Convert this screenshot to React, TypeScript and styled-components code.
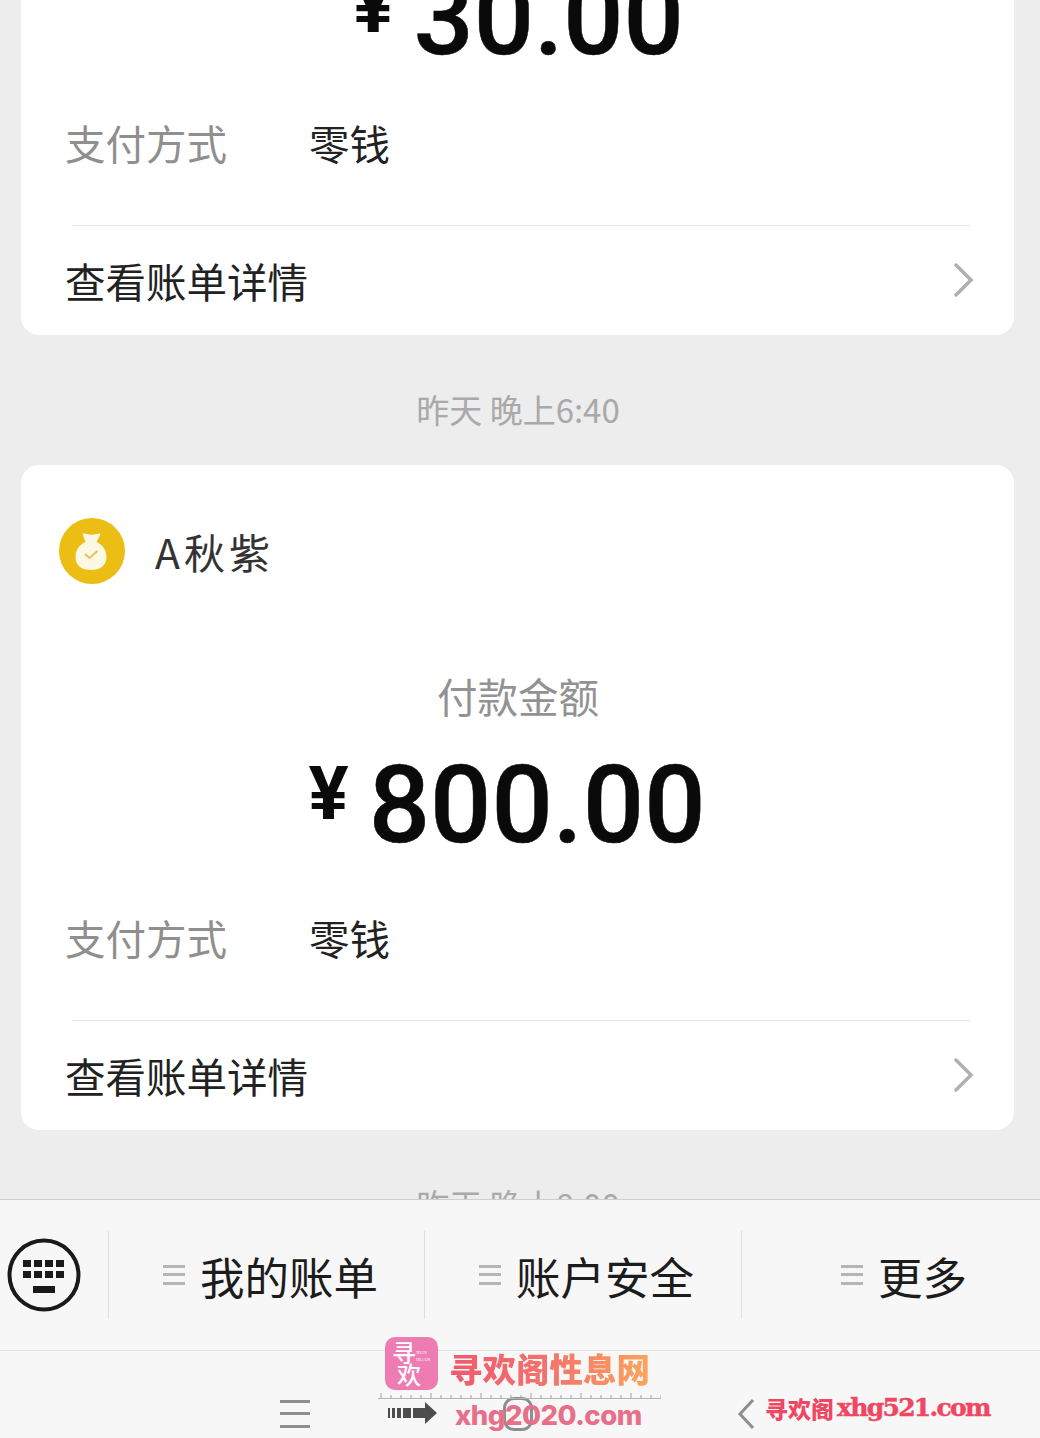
import React from 'react';
import styled, { createGlobalStyle } from 'styled-components';

const CJK = `"Noto Sans CJK SC", "Noto Sans", sans-serif`;

const GlobalStyle = createGlobalStyle`
  html, body {
    margin: 0;
    padding: 0;
    background: #ededed;
  }
  * {
    box-sizing: border-box;
  }
`;

const Page = styled.div`
  position: relative;
  display: flex;
  flex-direction: column;
  width: 1040px;
  height: 1438px;
  overflow: hidden;
  font-family: ${CJK};
`;

const Feed = styled.div`
  flex: none;
  height: 1199px;
  overflow: hidden;
`;

const FeedInner = styled.div`
  display: flex;
  flex-direction: column;
  margin-top: -330px;
`;

const Time = styled.div`
  height: 130px;
  padding: 50px 4px 0 0;
  text-align: center;
  font-size: 33px;
  line-height: 48px;
  color: #a9a9a9;
  flex: none;
`;

const Card = styled.div`
  flex: none;
  height: 665px;
  margin: 0 26px 0 21px;
  padding-top: 53px;
  background: #fff;
  border-radius: 18px;
`;

const Header = styled.div`
  display: flex;
  align-items: center;
  gap: 30px;
  height: 66px;
  padding-left: 38px;
`;

const Name = styled.div`
  font-size: 41px;
  line-height: 48px;
  letter-spacing: 4px;
  color: #333;
`;

const Label = styled.div`
  margin-top: 88px;
  text-align: center;
  padding-left: 1px;
  font-size: 40.500px;
  line-height: 48px;
  color: #929292;
`;

// the two receipts sit a little differently, so the offsets come from the data
const Amount = styled.div<{ $drop: number; $shift: number }>`
  display: flex;
  justify-content: center;
  align-items: flex-start;
  margin-top: ${(p) => 31 + p.$drop}px;
  height: ${(p) => 107 - p.$drop}px;
  padding-left: ${(p) => Math.max(p.$shift, 0)}px;
  padding-right: ${(p) => Math.max(-p.$shift, 0)}px;
  gap: 20px;
  color: #0a0a0a;
`;

const Yen = styled.span`
  margin-top: 6px;
  font-family: Roboto, sans-serif;
  font-weight: 700;
  font-size: 75px;
  line-height: 72px;
`;

const Digits = styled.span<{ $size: number }>`
  font-family: Roboto, sans-serif;
  font-weight: 500;
  font-size: ${(p) => p.$size}px;
  line-height: 108px;
  -webkit-text-stroke: 0.500px #0a0a0a;
`;

const PayRow = styled.div`
  display: flex;
  height: 48px;
  margin-top: 56px;
  padding-left: 44px;
  font-size: 40.500px;
  line-height: 48px;
`;

const PayLabel = styled.span`
  width: 244px;
  color: #8f8f8f;
`;

const PayValue = styled.span`
  color: #222;
`;

const Divider = styled.div`
  height: 1px;
  margin: 58px 44px 0 51px;
  background: #e6e6e6;
`;

const DetailRow = styled.div`
  display: flex;
  align-items: center;
  justify-content: space-between;
  height: 108px;
  padding: 0 40px 0 44px;
  font-size: 40.500px;
  color: #222;
`;

const Menu = styled.div`
  flex: none;
  display: flex;
  align-items: center;
  height: 152px;
  background: #f7f7f7;
  border-top: 1px solid #cfcfcf;
  border-bottom: 1px solid #e2e2e2;
`;

const KeyCell = styled.div`
  flex: none;
  display: flex;
  align-items: center;
  width: 108px;
  padding-left: 7px;
`;

const MenuItem = styled.div<{ $w: number; $pad: number }>`
  flex: none;
  display: flex;
  align-items: center;
  gap: 15px;
  width: ${(p) => p.$w}px;
  height: 88px;
  padding-left: ${(p) => p.$pad}px;
  border-left: 1px solid #dedede;
  font-size: 44.500px;
  color: #1c1c1c;
`;

const MenuBars = styled.span`
  flex: none;
  width: 22px;
  height: 20px;
  border-top: 3px solid #b5b5b5;
  border-bottom: 3px solid #b5b5b5;
  position: relative;
  &::after {
    content: '';
    position: absolute;
    left: 0;
    right: 0;
    top: 5px;
    height: 3px;
    background: #b5b5b5;
  }
`;

const Nav = styled.div`
  flex: 1;
  display: grid;
  grid-template-columns: 280px 30px 193px 30px 204px 18px;
  align-items: center;
  background: #f7f7f7;
  padding-top: 38px;
`;

const NavBars = styled.span`
  grid-column: 2;
  width: 30px;
  height: 28px;
  border-top: 3px solid #8e8e8e;
  border-bottom: 3px solid #8e8e8e;
  position: relative;
  &::after {
    content: '';
    position: absolute;
    left: 0;
    right: 0;
    top: 9px;
    height: 3px;
    background: #8e8e8e;
  }
`;

const NavHome = styled.span`
  grid-column: 4;
  width: 30px;
  height: 34px;
  border: 3px solid #8e8e8e;
  border-radius: 11px;
`;

const NavBack = styled.svg`
  grid-column: 6;
  width: 18px;
  height: 32px;
`;

const LogoMark = styled.div`
  position: absolute;
  left: 385px;
  top: 1337px;
  width: 53px;
  height: 53px;
  border-radius: 10px;
  background: #ee7bb2;
`;

const LogoChar = styled.span<{ $top: number; $left: number }>`
  position: absolute;
  left: ${(p) => p.$left}px;
  top: ${(p) => p.$top}px;
  color: #fff;
  font-size: 24px;
  line-height: 24px;
  font-weight: 500;
`;

const LogoSmall = styled.span`
  position: absolute;
  left: 31px;
  top: 12px;
  color: #fff;
  font-family: "Liberation Serif", serif;
  font-size: 5px;
  line-height: 7px;
`;

const BrandText = styled.div`
  position: absolute;
  left: 449px;
  top: 1346px;
  font-size: 33.500px;
  line-height: 44px;
  font-weight: 900;
  white-space: nowrap;
  background: linear-gradient(90deg, #f0596f 0%, #f4736b 50%, #f9a65c 100%);
  -webkit-background-clip: text;
  background-clip: text;
  color: transparent;
`;

const Ruler = styled.svg`
  position: absolute;
  left: 378px;
  top: 1392px;
  width: 283px;
  height: 8px;
`;

const Arrow = styled.svg`
  position: absolute;
  left: 388px;
  top: 1402px;
  width: 50px;
  height: 22px;
`;

const SiteOne = styled.div`
  position: absolute;
  left: 455px;
  top: 1398px;
  font-family: Inter, sans-serif;
  font-size: 27.500px;
  line-height: 34px;
  font-weight: 800;
  letter-spacing: -0.500px;
  color: #e76f89;
  white-space: nowrap;
`;

const SiteTwo = styled.div`
  position: absolute;
  left: 765px;
  top: 1391px;
  display: flex;
  align-items: center;
  font-size: 23px;
  line-height: 34px;
  font-weight: 900;
  color: #ef4763;
  white-space: nowrap;
`;

const SiteTwoLatin = styled.span`
  margin-left: 3px;
  font-family: "DejaVu Serif", serif;
  font-size: 25px;
  font-weight: 700;
  letter-spacing: -1.700px;
  -webkit-text-stroke: 0.500px #ef4763;
`;

type Receipt = { name: string; amount: string; size: number; drop: number; shift: number };

function PayCard({ receipt }: { receipt: Receipt }) {
  return (
    <Card>
      <Header>
        <svg width="66" height="66" viewBox="0 0 66 66">
          <circle cx="33" cy="33" r="33" fill="#ecbd12" />
          <path
            d="M25 15.500c5 1.500 10 1.500 15 0 1-.3 1.600.5 1.200 1.400L37.500 24c6 2.500 10 8 10 15 0 8.500-6 13-15.500 13S16.500 47.500 16.500 39c0-7 4-12.500 10-15l-2.700-7.100c-.3-.9.200-1.600 1.200-1.400z"
            fill="#fdf8e4"
          />
          <path d="M26 36l4.500 4 8-7" fill="none" stroke="#e6c35a" strokeWidth="2" />
        </svg>
        <Name>{receipt.name}</Name>
      </Header>
      <Label>付款金额</Label>
      <Amount $drop={receipt.drop} $shift={receipt.shift}>
        <Yen>¥</Yen>
        <Digits $size={receipt.size}>{receipt.amount}</Digits>
      </Amount>
      <PayRow>
        <PayLabel>支付方式</PayLabel>
        <PayValue>零钱</PayValue>
      </PayRow>
      <Divider />
      <DetailRow>
        查看账单详情
        <svg width="20" height="34" viewBox="0 0 20 34">
          <path
            d="M2 2l15 15L2 32"
            fill="none"
            stroke="#b0b0b0"
            strokeWidth="3.500"
            strokeLinecap="round"
          />
        </svg>
      </DetailRow>
    </Card>
  );
}

function KeyboardIcon() {
  const keys = [0, 1, 2, 3];
  return (
    <svg width="74" height="74" viewBox="0 0 74 74">
      <circle cx="37" cy="37" r="34.500" fill="none" stroke="#1a1a1a" strokeWidth="4" />
      {keys.map((k) => (
        <React.Fragment key={k}>
          <rect x={16 + k * 11} y="22" width="8" height="7" fill="#1a1a1a" />
          <rect x={16 + k * 11} y="33" width="8" height="7" fill="#1a1a1a" />
        </React.Fragment>
      ))}
      <rect x="26" y="48" width="22" height="7" fill="#1a1a1a" />
    </svg>
  );
}

const first: Receipt = { name: 'A秋紫', amount: '30.00', size: 106, drop: 8, shift: 2 };
const second: Receipt = { name: 'A秋紫', amount: '800.00', size: 108, drop: 0, shift: -21 };

export default function App() {
  const ticks = Array.from({ length: 29 }, (_, i) => i);
  return (
    <Page>
      <GlobalStyle />
      <Feed>
        <FeedInner>
          <PayCard receipt={first} />
          <Time>昨天 晚上6:40</Time>
          <PayCard receipt={second} />
          <Time>昨天 晚上8:00</Time>
        </FeedInner>
      </Feed>
      <Menu>
        <KeyCell>
          <KeyboardIcon />
        </KeyCell>
        <MenuItem $w={316} $pad={54}>
          <MenuBars />
          我的账单
        </MenuItem>
        <MenuItem $w={317} $pad={54}>
          <MenuBars />
          账户安全
        </MenuItem>
        <MenuItem $w={299} $pad={99}>
          <MenuBars />
          更多
        </MenuItem>
      </Menu>
      <Nav>
        <NavBars />
        <NavHome />
        <NavBack viewBox="0 0 18 32">
          <path d="M16 2L3 16l13 14" fill="none" stroke="#8e8e8e" strokeWidth="3" />
        </NavBack>
      </Nav>

      <LogoMark>
        <LogoChar $left={7} $top={3}>寻</LogoChar>
        <LogoChar $left={12} $top={25}>欢</LogoChar>
        <LogoSmall>
          XUN
          <br />
          HUAN
        </LogoSmall>
      </LogoMark>
      <BrandText>寻欢阁性息网</BrandText>
      <Ruler viewBox="0 0 283 8">
        <path d="M0 6.500h283" stroke="#b5b5b5" strokeWidth="1" />
        {ticks.map((i) => (
          <path
            key={i}
            d={`M${3 + i * 10} ${i % 5 === 0 ? 1 : 3}V6`}
            stroke="#a0a0a0"
            strokeWidth="1"
          />
        ))}
      </Ruler>
      <Arrow viewBox="0 0 50 22">
        <path d="M0 6h2v10H0zM4 6h3v10H4zM9 6h4v10H9zM15 6h8v10h-8zM25 6h12V0l12 11-12 11v-6H25z" fill="#4d4d4d" />
      </Arrow>
      <SiteOne>xhg2020.com</SiteOne>
      <SiteTwo>
        寻欢阁
        <SiteTwoLatin>xhg521.com</SiteTwoLatin>
      </SiteTwo>
    </Page>
  );
}
